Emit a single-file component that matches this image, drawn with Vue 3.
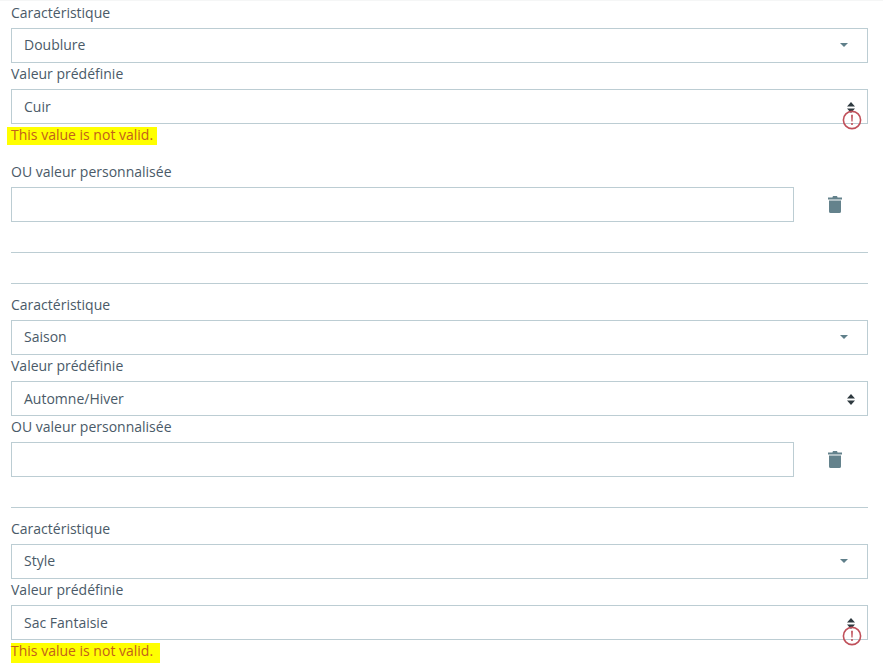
<script setup>
const blocks = [
  { id: 1, feature: 'Doublure', value: 'Cuir', error: true, custom: true, markClass: 'mark-a', divided: true },
  { id: 2, feature: 'Saison', value: 'Automne/Hiver', error: false, custom: true, divided: false },
  { id: 3, feature: 'Style', value: 'Sac Fantaisie', error: true, custom: false, markClass: 'mark-b', divided: false }
]
</script>

<template>
  <div class="page">
    <section v-for="b in blocks" :key="b.id" class="block">
      <label class="label">Caractéristique</label>
      <div class="control">
        <span class="nudge">{{ b.feature }}</span>
        <svg class="caret" width="8" height="4" viewBox="0 0 8 4"><path d="M0 0h8L4 4z" fill="#5f7f8a" /></svg>
      </div>

      <label class="label">Valeur prédéfinie</label>
      <div class="control select-wrap">
        <span>{{ b.value }}</span>
        <svg class="updown" width="8" height="11" viewBox="0 0 8 11"><path d="M4 0l4 4.5H0zM0 6.5h8L4 11z" fill="#2f3a40" /></svg>
        <svg v-if="b.error" class="warn" width="20" height="20" viewBox="0 0 20 20">
          <circle cx="10" cy="10" r="8.6" fill="none" stroke="#c0505a" stroke-width="1.6" />
          <path d="M9.1 4.8h1.8l-.3 6.6H9.4z" fill="#c0505a" />
          <circle cx="10" cy="14" r="1.05" fill="#c0505a" />
        </svg>
      </div>
      <div v-if="b.error" class="error" :class="b.markClass"><span class="mark">This value is not valid.</span></div>

      <template v-if="b.custom">
        <label class="label">OU valeur personnalisée</label>
        <div class="input-row">
          <div class="control input"></div>
          <svg class="trash" width="14" height="17" viewBox="0 0 14 17">
            <path d="M5 0h4l.6 1.4H14V3.4H0V1.4h4.4z M1 4.6h12V15.4a1.6 1.6 0 0 1-1.6 1.6H2.6A1.6 1.6 0 0 1 1 15.4z" fill="#64828c" />
          </svg>
        </div>
        <hr class="rule" />
      </template>
      <hr v-if="b.divided" class="rule" />
    </section>
  </div>
</template>

<style>
html, body { margin: 0; background: #fff; }
</style>

<style scoped>
.page {
  width: 883px;
  height: 664px;
  overflow: hidden;
  box-sizing: border-box;
  border-top: 1px solid #f5f6f6;
  padding: 1px 15px 0 11px;
  font-family: "Open Sans", "Liberation Sans", sans-serif;
  font-size: 14px;
  color: #4a5a68;
}
.label {
  display: block;
  height: 21px;
  line-height: 21px;
  margin-bottom: 5px;
}
.control {
  box-sizing: border-box;
  height: 35px;
  border: 1px solid #bccdd3;
  padding: 0 19px 0 12px;
  display: flex;
  align-items: center;
  justify-content: space-between;
  background: #fff;
}
.nudge { margin-top: -2px; }
.caret { margin-top: -1px; }
.select-wrap { position: relative; padding-right: 12px; }
.updown { margin-top: 1px; }
.warn { position: absolute; right: 5px; top: 20px; }
.error {
  height: 37px;
  line-height: 21px;
  color: #c2601c;
}
.mark {
  display: inline-block;
  background: #ffff00;
  line-height: 16px;
  height: 18px;
}
.mark-a .mark { margin: 3px 0 0 -4px; padding: 0 4px; }
.mark-b .mark { margin-top: 3px; height: 20px; padding-right: 7px; }
.input-row { display: flex; align-items: center; }
.input { width: 783px; flex: none; }
.trash { margin-left: 34px; }
.rule {
  border: 0;
  height: 1px;
  background: #bccdd3;
  margin: 30px 0 0;
}
.block + .block { padding-top: 10px; }
</style>
